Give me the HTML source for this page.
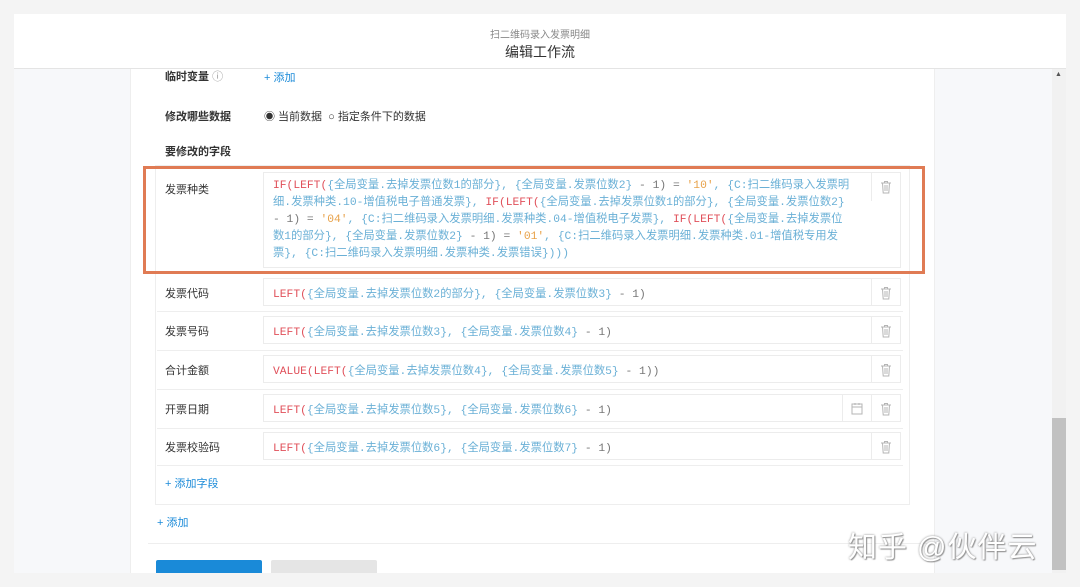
<!DOCTYPE html>
<html><head><meta charset="utf-8"><style>
*{margin:0;padding:0;box-sizing:border-box}
body{width:1080px;height:587px;background:#f4f4f4;position:relative;overflow:hidden;font-family:"Liberation Sans","Noto Sans CJK SC",sans-serif;color:#333;font-size:11px}
.a{position:absolute}
.hdr{left:14px;top:14px;width:1052px;height:55px;background:#fff;border-bottom:1px solid #e4e4e4;text-align:center}
.side{top:69px;height:504px;background:#f7f8fa}
.main{left:130px;top:69px;width:805px;height:504px;background:#fff;border-left:1px solid #eee;border-right:1px solid #eee}
.lbl{font-size:11px;color:#333}
.b{font-weight:bold}
.blue{color:#1a8ad8}
.inp{left:263px;width:638px;height:28px;border:1px solid #ececec;background:#fff}
.code{font-family:"Liberation Mono","Noto Sans CJK SC",monospace;font-size:11.3px;color:#6ab0d6;white-space:nowrap}
.r{color:#e0505a}.o{color:#e8a24a}.g{color:#777}
.tr{position:absolute;right:0;top:0;width:29px;height:100%;border-left:1px solid #ececec;text-align:center;padding-top:7px}
.sep{left:157px;width:746px;height:1px;background:#eee}
</style></head><body>
<svg width="0" height="0" style="position:absolute"><symbol id="t" viewBox="0 0 12 14"><path d="M1 3h10M4.5 3V1.5h3V3M2.5 3l.7 10h5.6l.7-10M5 5v6M7 5v6" fill="none" stroke="#b5b5b5" stroke-width="1"/></symbol></svg>
<div class="a hdr"><div style="font-size:10px;color:#888;margin-top:12px">扫二维码录入发票明细</div><div style="font-size:14px;color:#333;margin-top:1px">编辑工作流</div></div>
<div class="a side" style="left:14px;width:116px"></div>
<div class="a side" style="left:935px;width:117px"></div>
<div class="a" style="left:1052px;top:69px;width:14px;height:504px;background:#f1f1f1"></div>
<div class="a" style="left:1052px;top:418px;width:14px;height:152px;background:#c1c1c1"></div>
<div class="a" style="left:1055px;top:71px;font-size:7px;color:#555">▲</div>
<div class="a main"></div>
<div class="a lbl b" style="left:165px;top:68px">临时变量 <span style="font-weight:normal;color:#999">ⓘ</span></div>
<div class="a blue" style="left:264px;top:69px">+ 添加</div>
<div class="a lbl b" style="left:165px;top:108px">修改哪些数据</div>
<div class="a" style="left:264px;top:108px">◉ 当前数据 &nbsp;○ 指定条件下的数据</div>
<div class="a lbl b" style="left:165px;top:143px">要修改的字段</div>
<div class="a" style="left:155px;top:165px;width:755px;height:340px;border:1px solid #eee"></div>
<div class="a lbl" style="left:165px;top:181px">发票种类</div>
<div class="a inp" style="top:172px;height:96px"><div class="tr" style="height:28px"><svg width="12" height="14"><use href="#t"/></svg></div></div>
<div class="a code" style="left:273px;top:178px;line-height:17px"><span class="r">IF(LEFT(</span>{全局变量.去掉发票位数1的部分}, {全局变量.发票位数2} <span class="g">- 1) =</span> <span class="o">'10'</span>, {C:扫二维码录入发票明<br>细.发票种类.10-增值税电子普通发票}, <span class="r">IF(LEFT(</span>{全局变量.去掉发票位数1的部分}, {全局变量.发票位数2}<br><span class="g">- 1) =</span> <span class="o">'04'</span>, {C:扫二维码录入发票明细.发票种类.04-增值税电子发票}, <span class="r">IF(LEFT(</span>{全局变量.去掉发票位<br>数1的部分}, {全局变量.发票位数2} <span class="g">- 1) =</span> <span class="o">'01'</span>, {C:扫二维码录入发票明细.发票种类.01-增值税专用发<br>票}, {C:扫二维码录入发票明细.发票种类.发票错误})))</div>
<div class="a" style="left:143px;top:166px;width:782px;height:108px;border:3px solid #e07b54"></div>

<div class="a lbl" style="left:165px;top:285px">发票代码</div>
<div class="a inp" style="top:278px"><div class="tr"><svg width="12" height="14"><use href="#t"/></svg></div></div>
<div class="a code" style="left:273px;top:285px"><span class="r">LEFT(</span>{全局变量.去掉发票位数2的部分}, {全局变量.发票位数3} <span class="g">- 1)</span></div>
<div class="a sep" style="top:311px"></div>
<div class="a lbl" style="left:165px;top:323px">发票号码</div>
<div class="a inp" style="top:316px"><div class="tr"><svg width="12" height="14"><use href="#t"/></svg></div></div>
<div class="a code" style="left:273px;top:323px"><span class="r">LEFT(</span>{全局变量.去掉发票位数3}, {全局变量.发票位数4} <span class="g">- 1)</span></div>
<div class="a sep" style="top:350px"></div>
<div class="a lbl" style="left:165px;top:362px">合计金额</div>
<div class="a inp" style="top:355px"><div class="tr"><svg width="12" height="14"><use href="#t"/></svg></div></div>
<div class="a code" style="left:273px;top:362px"><span class="r">VALUE(LEFT(</span>{全局变量.去掉发票位数4}, {全局变量.发票位数5} <span class="g">- 1))</span></div>
<div class="a sep" style="top:389px"></div>
<div class="a lbl" style="left:165px;top:401px">开票日期</div>
<div class="a inp" style="top:394px"><div class="tr"><svg width="12" height="14"><use href="#t"/></svg></div><div class="tr" style="right:29px"><svg width="12" height="13"><rect x="1" y="2" width="10" height="10" fill="none" stroke="#b5b5b5"/><path d="M1 5h10M4 1v2M8 1v2" stroke="#b5b5b5"/></svg></div></div>
<div class="a code" style="left:273px;top:401px"><span class="r">LEFT(</span>{全局变量.去掉发票位数5}, {全局变量.发票位数6} <span class="g">- 1)</span></div>
<div class="a sep" style="top:428px"></div>
<div class="a lbl" style="left:165px;top:439px">发票校验码</div>
<div class="a inp" style="top:432px"><div class="tr"><svg width="12" height="14"><use href="#t"/></svg></div></div>
<div class="a code" style="left:273px;top:439px"><span class="r">LEFT(</span>{全局变量.去掉发票位数6}, {全局变量.发票位数7} <span class="g">- 1)</span></div>
<div class="a sep" style="top:465px"></div>
<div class="a blue" style="left:165px;top:475px">+ 添加字段</div>
<div class="a blue" style="left:157px;top:514px">+ 添加</div>
<div class="a" style="left:148px;top:543px;width:787px;height:1px;background:#eee"></div>
<div class="a" style="left:156px;top:560px;width:106px;height:13px;background:#1a8ad8;border-radius:2px 2px 0 0"></div>
<div class="a" style="left:271px;top:560px;width:106px;height:13px;background:#e5e5e5;border-radius:2px 2px 0 0"></div>
<div class="a" style="left:848px;top:524px;font-size:29px;color:#fff;text-shadow:0 0 2px #888,1px 1px 1px #999;letter-spacing:1px">知乎 @伙伴云</div>
</body></html>
